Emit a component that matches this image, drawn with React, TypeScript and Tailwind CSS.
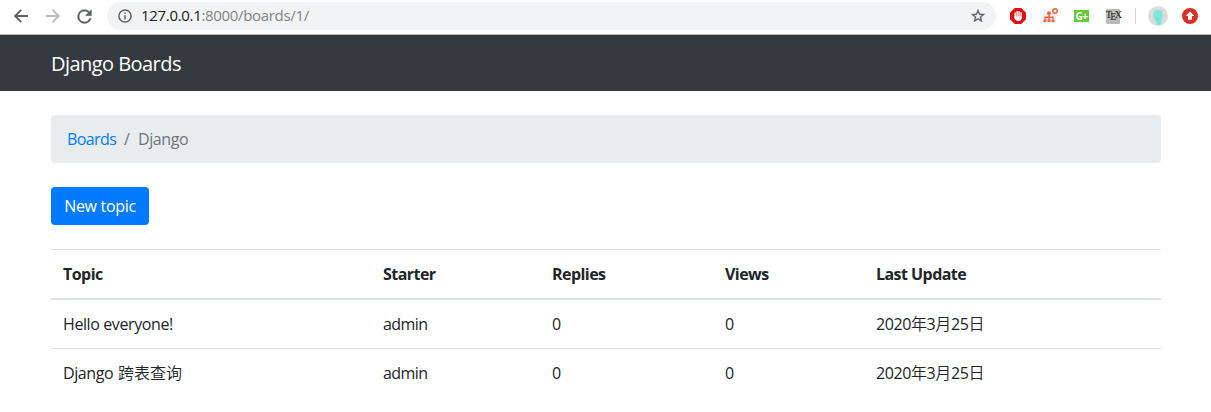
import React from "react";

const topics = [
  { subject: "Hello everyone!", cjk: "", starter: "admin", replies: 0, views: 0, year: "2020", month: "3", day: "25" },
  { subject: "Django ", cjk: "跨表查询", starter: "admin", replies: 0, views: 0, year: "2020", month: "3", day: "25" },
];

function BrowserBar() {
  return (
    <div className="flex h-[35px] items-center border-b border-[#b5b7ba] bg-white pb-[2px]">
      <div className="flex items-center pl-3 text-[#5f6368]">
        <svg width="18" height="18" viewBox="0 0 18 18" fill="none" stroke="currentColor" strokeWidth="1.9">
          <path d="M16 9H3.2M9.3 2.8 3.1 9l6.2 6.2" />
        </svg>
        <svg className="ml-[14px] text-[#babcbe]" width="18" height="18" viewBox="0 0 18 18" fill="none" stroke="currentColor" strokeWidth="1.9">
          <path d="M2 9h12.8M8.7 2.8 14.9 9l-6.2 6.2" />
        </svg>
        <svg className="ml-[12px]" width="21" height="21" viewBox="0 0 24 24" fill="currentColor" stroke="currentColor" strokeWidth=".4">
          <path d="M17.65 6.35A7.96 7.96 0 0 0 12 4a8 8 0 1 0 7.73 10h-2.08A6 6 0 1 1 12 6c1.66 0 3.14.69 4.22 1.78L13 11h7V4z" />
        </svg>
      </div>
      <div className="ml-[12px] flex h-7 w-[889px] items-center rounded-full bg-[#f1f3f4] pr-[10px] pl-[11px]">
        <svg width="14" height="14" viewBox="0 0 14 14" fill="none" stroke="#5f6368" strokeWidth="1.5">
          <circle cx="7" cy="7" r="6.1" />
          <path d="M7 6.2v4.2M7 3.6v1.4" />
        </svg>
        <div className="ml-[9px] flex-1 pb-0.5 text-[15px] leading-5 tracking-[-0.32px] text-[#202124]">
          127.0.0.1<span className="text-[#80868b]">:8000/boards/1/</span>
        </div>
        <svg width="16" height="16" viewBox="0 0 24 24" fill="#5f6368">
          <path d="M22 9.24l-7.19-.62L12 2 9.19 8.63 2 9.24l5.46 4.73L5.82 21 12 17.27 18.18 21l-1.63-7.03zM12 15.4l-3.76 2.27 1-4.28-3.32-2.88 4.38-.38L12 6.1l1.71 4.04 4.38.38-3.32 2.88 1 4.28z" stroke="#5f6368" strokeWidth=".6" />
        </svg>
      </div>
      <Extensions />
    </div>
  );
}

function Extensions() {
  return (
    <div className="ml-[14px] flex items-center">
      <svg width="16" height="16" viewBox="0 0 16 16">
        <path d="M4.8 0h6.4L16 4.8v6.4L11.2 16H4.8L0 11.2V4.8z" fill="#e40d13" />
        <path d="M5.1 5v4M7.100 3.600v5M9.100 3.600v5M11.100 4.800v4.500" stroke="#fff" strokeWidth="1.4" strokeLinecap="round" />
        <path d="M4.4 8.300h7.400v1.500c0 2-1.200 3.200-2.900 3.200-2.600 0-4.500-1.300-4.500-3.200z" fill="#fff" />
      </svg>
      <svg className="ml-[15px]" width="18" height="18" viewBox="0 0 18 18" fill="none">
        <path d="M2 6h13v10H2z" fill="#eeeeee" />
        <circle cx="14" cy="4" r="2.3" stroke="#f4623a" strokeWidth="1.5" />
        <circle cx="8" cy="6.300" r="2" fill="#ef6844" />
        <path d="M8 7v7M4 12.500V10.300h8v2.200" stroke="#ef6844" strokeWidth="1.4" />
        <path d="M2.500 12.500h3v2.500h-3zM6.500 12.500h3v2.500h-3zM10.500 12.500h3v2.500h-3z" fill="#ef6844" />
      </svg>
      <div className="ml-[15px] flex h-3 w-[15px] items-center justify-center bg-[#62cc38] text-[10px] leading-3 font-bold tracking-[-0.5px] text-white">
        G+
      </div>
      <div className="ml-[17px] flex h-[15px] w-[14px] items-start justify-center rounded-[1px] bg-[#b9b9b9] font-['Liberation_Serif',serif] text-[10px] leading-[12px] tracking-[-1.7px] text-[#222]">
        <span>T</span>
        <span className="pt-[2px]">E</span>
        <span>X</span>
      </div>
      <div className="ml-[15px] h-4 w-px bg-[#cfd1d4]" />
      <svg className="ml-3" width="20" height="20" viewBox="0 0 20 20">
        <circle cx="10" cy="10" r="10" fill="#dcdcdc" />
        <path d="M10 3.800c3 0 4.800 1.800 4.800 5 0 2.800-.8 4.700-1.600 5.900v3.900c-1.700.9-3.200.9-4.800.4v-2.600c-.1-1-.8-1.500-1.500-2.600C5.800 12.300 5.200 11 5.200 9c0-3.200 2-5.200 4.800-5.200z" fill="#7de8da" />
        <path d="M8.400 13.800c1.200.2 2.300-.3 3.100-1.500" fill="none" stroke="#55d3c6" strokeWidth=".8" />
      </svg>
      <svg className="ml-[14px]" width="16" height="16" viewBox="0 0 16 16">
        <circle cx="8" cy="8" r="8" fill="#d93025" />
        <path d="M8 3.500 12.300 8H10v3.700H6V8H3.700z" fill="#fff" />
      </svg>
    </div>
  );
}

const columns = "grid grid-cols-[320px_169px_173px_151px_297px] *:px-3";

export default function App() {
  return (
    <div className="h-[412px] overflow-hidden bg-white font-['Open_Sans','Noto_Sans_CJK_SC',sans-serif] text-base text-[#212529]">
      <BrowserBar />
      <nav className="flex h-14 items-center bg-[#343a40] px-[51px] pt-px text-xl leading-[30px] text-white">
        <span className="tracking-[-0.55px]">Django Boards</span>
      </nav>
      <main className="px-[51px] pt-6 pr-[50px]">
        <ol className="flex h-12 items-center rounded bg-[#e9ecef] px-4 text-[#6c757d]">
          <li className="w-[49px] tracking-[-0.6px] text-[#007bff]">Boards</li>
          <li className="w-[22px] pl-2">/</li>
          <li className="tracking-[-0.4px]">Django</li>
        </ol>
        <button className="mt-6 flex h-[38px] w-[98px] items-center justify-center rounded bg-[#007bff] tracking-[-0.3px] text-white">
          New topic
        </button>
        <section className="mt-6 leading-6">
          <div className={`${columns} h-[51px] border-t border-b-2 border-[#dee2e6] pt-3 font-bold tracking-[-0.55px]`}>
            <div>Topic</div>
            <div>Starter</div>
            <div>Replies</div>
            <div>Views</div>
            <div>Last Update</div>
          </div>
          {topics.map((t, i) => (
            <div key={i} className={`${columns} ${i === 0 ? "h-12" : "h-[49px] border-t border-[#dee2e6]"} pt-3 tracking-[-0.4px]`}>
              <div>
                {t.subject}
                {t.cjk && <span className="ml-px font-[350] tracking-normal">{t.cjk}</span>}
              </div>
              <div className="tracking-[-0.6px]">{t.starter}</div>
              <div>{t.replies}</div>
              <div>{t.views}</div>
              <div>
                {t.year}<span className="font-[350]">年</span>{t.month}<span className="font-[350]">月</span>{t.day}<span className="font-[350]">日</span>
              </div>
            </div>
          ))}
        </section>
      </main>
    </div>
  );
}
